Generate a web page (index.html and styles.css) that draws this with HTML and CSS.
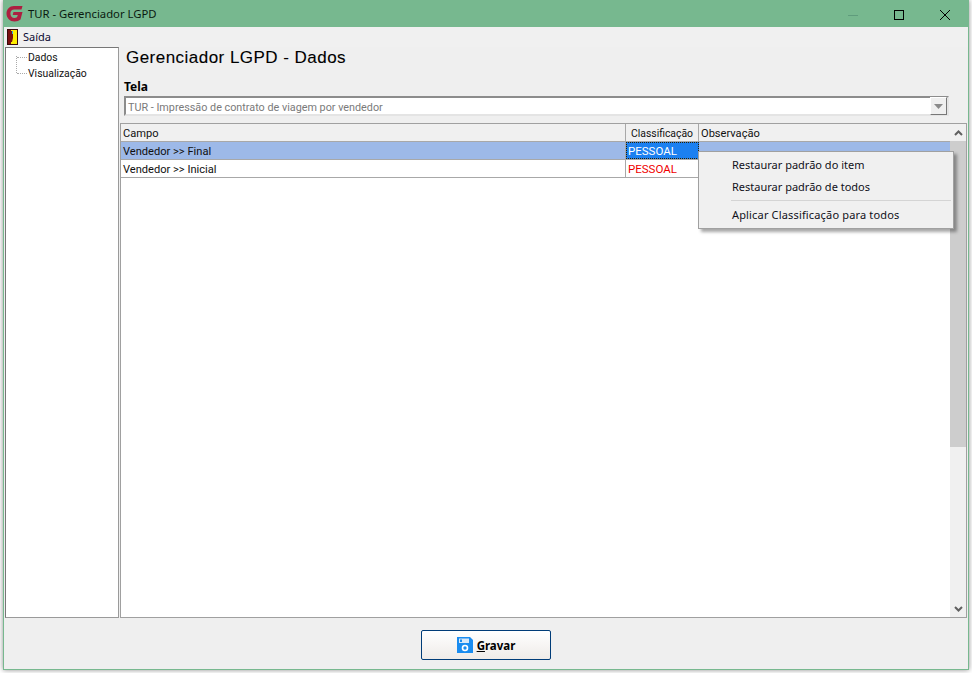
FILE: index.html
```html
<!DOCTYPE html>
<html lang="pt">
<head>
<meta charset="utf-8">
<title>TUR - Gerenciador LGPD</title>
<link rel="stylesheet" href="styles.css">
</head>
<body>
<div class="window">
  <header class="titlebar">
    <svg class="logo" width="17" height="17" viewBox="0 0 17 17"><path d="M16.5 1 H8 C3.5 1 0.5 4.5 0.5 8.5 C0.5 13 4 16.5 8.5 16.5 C11 16.5 13 15.5 14.5 14.5 L16.5 7 H7.5 L6.7 10 H11.8 L11 12.3 C10.2 12.9 9.3 13 8.5 13 C6 13 4.4 11 4.4 8.5 C4.4 6.2 6 4.6 8.2 4.6 H15.5 Z" fill="#ad1f40"/></svg>
    <span class="title">TUR - Gerenciador LGPD</span>
    <div class="controls">
      <svg width="46" height="26" viewBox="0 0 46 26"><path d="M18 14.5 H28" stroke="#5f9c7c"/></svg>
      <svg width="46" height="26" viewBox="0 0 46 26"><rect x="18.5" y="9.5" width="9" height="9" fill="none" stroke="#000"/></svg>
      <svg width="46" height="26" viewBox="0 0 46 26"><path d="M18 9 L28 19 M28 9 L18 19" stroke="#000" fill="none"/></svg>
    </div>
  </header>
  <nav class="menubar">
    <svg width="11" height="16" viewBox="0 0 11 16"><rect x="0" y="0" width="11" height="16" fill="#3a0a0a"/><rect x="4" y="1" width="6" height="14" fill="#ffee00"/><rect x="1" y="1" width="3" height="14" fill="#7a1010"/><path d="M4 2 H6 V9 L5 13 H4 Z" fill="#7a1010"/><rect x="5" y="2" width="1" height="3" fill="#30b0e0"/></svg>
    <span class="menu-item">Saída</span>
  </nav>
  <div class="content">
    <aside class="tree">
      <div class="tree-item"><span class="dots"></span>Dados</div>
      <div class="tree-item"><span class="dots"></span>Visualização</div>
    </aside>
    <main class="panel">
      <h1 class="heading">Gerenciador LGPD - Dados</h1>
      <label class="field-label">Tela</label>
      <div class="combo">
        <span class="combo-text">TUR - Impressão de contrato de viagem por vendedor</span>
        <span class="combo-btn"><svg width="9" height="5" viewBox="0 0 9 5"><path d="M0 0 H9 L4.5 5 Z" fill="#8a8a8a"/></svg></span>
      </div>
      <div class="grid">
        <div class="grid-body">
          <div class="row head">
            <div class="cell c1">Campo</div>
            <div class="cell c2 center">Classificação</div>
            <div class="cell c3">Observação</div>
          </div>
          <div class="row selected">
            <div class="cell c1">Vendedor &gt;&gt; Final</div>
            <div class="cell c2 focus">PESSOAL</div>
            <div class="cell c3"></div>
          </div>
          <div class="row">
            <div class="cell c1">Vendedor &gt;&gt; Inicial</div>
            <div class="cell c2 red">PESSOAL</div>
            <div class="cell c3 blank"></div>
          </div>
        </div>
        <div class="scrollbar">
          <span class="sb-btn"><svg width="9" height="6" viewBox="0 0 9 6"><path d="M1 5 L4.5 1.5 L8 5" fill="none" stroke="#606060" stroke-width="2"/></svg></span>
          <span class="sb-thumb"></span>
          <span class="sb-track"></span>
          <span class="sb-btn"><svg width="9" height="6" viewBox="0 0 9 6"><path d="M1 1 L4.5 4.5 L8 1" fill="none" stroke="#606060" stroke-width="2"/></svg></span>
        </div>
        <div class="context-menu">
          <div class="menu-row">Restaurar padrão do item</div>
          <div class="menu-row">Restaurar padrão de todos</div>
          <div class="menu-sep"></div>
          <div class="menu-row wide">Aplicar Classificação para todos</div>
        </div>
      </div>
    </main>
  </div>
  <footer class="footer">
    <button class="save" type="button">
      <svg width="16" height="16" viewBox="0 0 16 16"><path d="M0 0 H13 L16 3 V16 H0 Z" fill="#1a8cf0"/><rect x="2" y="1.5" width="10" height="4.5" fill="#d8e8f8"/><rect x="3" y="2.5" width="2" height="2.5" fill="#1a8cf0"/><circle cx="8" cy="11" r="2.5" fill="none" stroke="#fff" stroke-width="1.6"/></svg>
      <span><u>G</u>ravar</span>
    </button>
  </footer>
</div>
</body>
</html>
```
FILE: styles.css
```css
* { box-sizing: border-box; }
html, body { margin: 0; padding: 0; height: 100%; background: #fff; overflow: hidden; }
body { padding: 0 3px 3px 3px; font-family: Roboto, sans-serif; font-size: 11.1px; color: #000; }
.window {
  width: 966px; height: 670px; display: flex; flex-direction: column;
  background: #efefef; border: 1px solid #77b88f; border-top: 0;
  box-shadow: 0 0 5px rgba(0,0,0,.45);
}
.titlebar { height: 27px; background: #77b88f; display: flex; align-items: center; padding-left: 3px; margin: 0 -1px; flex: none; }
.logo { flex: none; }
.title { margin-left: 5px; font: 11.3px "Noto Sans", sans-serif; color: #0a1a10; }
.controls { margin-left: auto; display: flex; margin-right: 1px; }
.controls svg { display: block; }
.menubar { height: 20px; display: flex; align-items: center; gap: 5px; padding: 0 0 1px 3px; background: #f0f0f0; flex: none; }
.menu-item { font: 11px/15px "Noto Sans", sans-serif; color: #0a0a30; }
.content { height: 571px; flex: none; display: flex; padding: 0 0 0 1px; gap: 1px; }
.tree { width: 114px; height: 571px; background: #fff; border: 1px solid #9a9a9a; border-top-color: #777; border-left-color: #777; padding: 1px 0 0 0; flex: none; font-size: 10.4px; }
.tree-item { position: relative; height: 16px; line-height: 15px; display: flex; align-items: center; color: #101010; }
.dots { width: 10px; height: 1px; margin-left: 11px; margin-right: 1px; border-top: 1px dotted #aaa; }
.tree-item:nth-child(2)::before { content: ""; position: absolute; left: 10px; top: -9px; height: 17px; border-left: 1px dotted #aaa; }
.panel { flex: 1; min-width: 0; display: flex; flex-direction: column; }
.heading { margin: 0 0 0 6px; height: 23px; font: 400 17px/22px "Liberation Sans", sans-serif; letter-spacing: .47px; color: #000; -webkit-text-stroke: .1px #000; }
.field-label { margin: 10px 0 0 4px; height: 14px; font: 700 12px/13px "Noto Sans", sans-serif; }
.combo { margin: 2px 0 0 4px; width: 825px; height: 20px; flex: none; background: #fff; border: 2px solid #8c8c8c; border-right-color: #e4e4e4; border-bottom-color: #e4e4e4; display: flex; align-items: center; justify-content: space-between; }
.combo-text { padding: 2px 0 0 2px; color: #7a7a7a; font-size: 10.8px; }
.combo-btn { width: 17px; height: 18px; background: #efefef; border: 1px solid #fff; border-right-color: #777; border-bottom-color: #777; display: flex; align-items: center; justify-content: center; }
.grid { position: relative; margin-top: 7px; width: 847px; height: 495px; flex: none; display: flex; background: #fff; border: 1px solid #a0a0a0; }
.grid-body { flex: 1; min-width: 0; }
.row { display: flex; height: 18px; border-bottom: 1px solid #a8a8a8; line-height: 19px; }
.row.head { height: 18px; background: #f0f0f0; }
.row.selected { background: #9db9e8; }
.cell { padding-left: 2px; white-space: nowrap; overflow: hidden; color: #101010; }
.c1 { width: 505px; border-right: 1px solid #a8a8a8; }
.c2 { width: 73px; border-right: 1px solid #a8a8a8; }
.c3 { flex: 1; }
.c3.blank { background: #fff; }
.center { text-align: center; padding-left: 0; font-size: 10.4px; }
.focus { background: #1c80f0; color: #fff; border: 1px dotted #2a2000; padding-left: 1px; line-height: 17px; font-size: 11.5px; }
.red { color: #f00000; font-size: 11.5px; }
.scrollbar { width: 16px; flex: none; display: flex; flex-direction: column; background: #f0f0f0; }
.sb-btn { height: 17px; display: flex; align-items: center; justify-content: center; flex: none; }
.sb-thumb { height: 306px; background: #cdcdcd; flex: none; }
.sb-track { flex: 1; }
.context-menu { position: absolute; left: 577px; top: 27px; width: 256px; height: 78px; padding-top: 2px; background: #f0f0f0; border: 1px solid #a0a0a0; box-shadow: 3px 3px 3px rgba(0,0,0,.35); }
.menu-row { height: 22px; padding-left: 33px; font: 11px/21px "Noto Sans", sans-serif; color: #10101a; }
.menu-row.wide { letter-spacing: .16px; }
.menu-sep { height: 1px; margin: 2px 2px 3px 32px; background: #d4d4d4; }
.footer { flex: 1; display: flex; justify-content: center; padding-top: 12px; }
.save { width: 130px; height: 30px; display: flex; align-items: center; justify-content: center; gap: 4px; border: 1px solid #003c78; border-radius: 2px; background: linear-gradient(#ffffff, #efebe8); font: 700 11.5px "Noto Sans", sans-serif; color: #000; padding: 0; }
```
